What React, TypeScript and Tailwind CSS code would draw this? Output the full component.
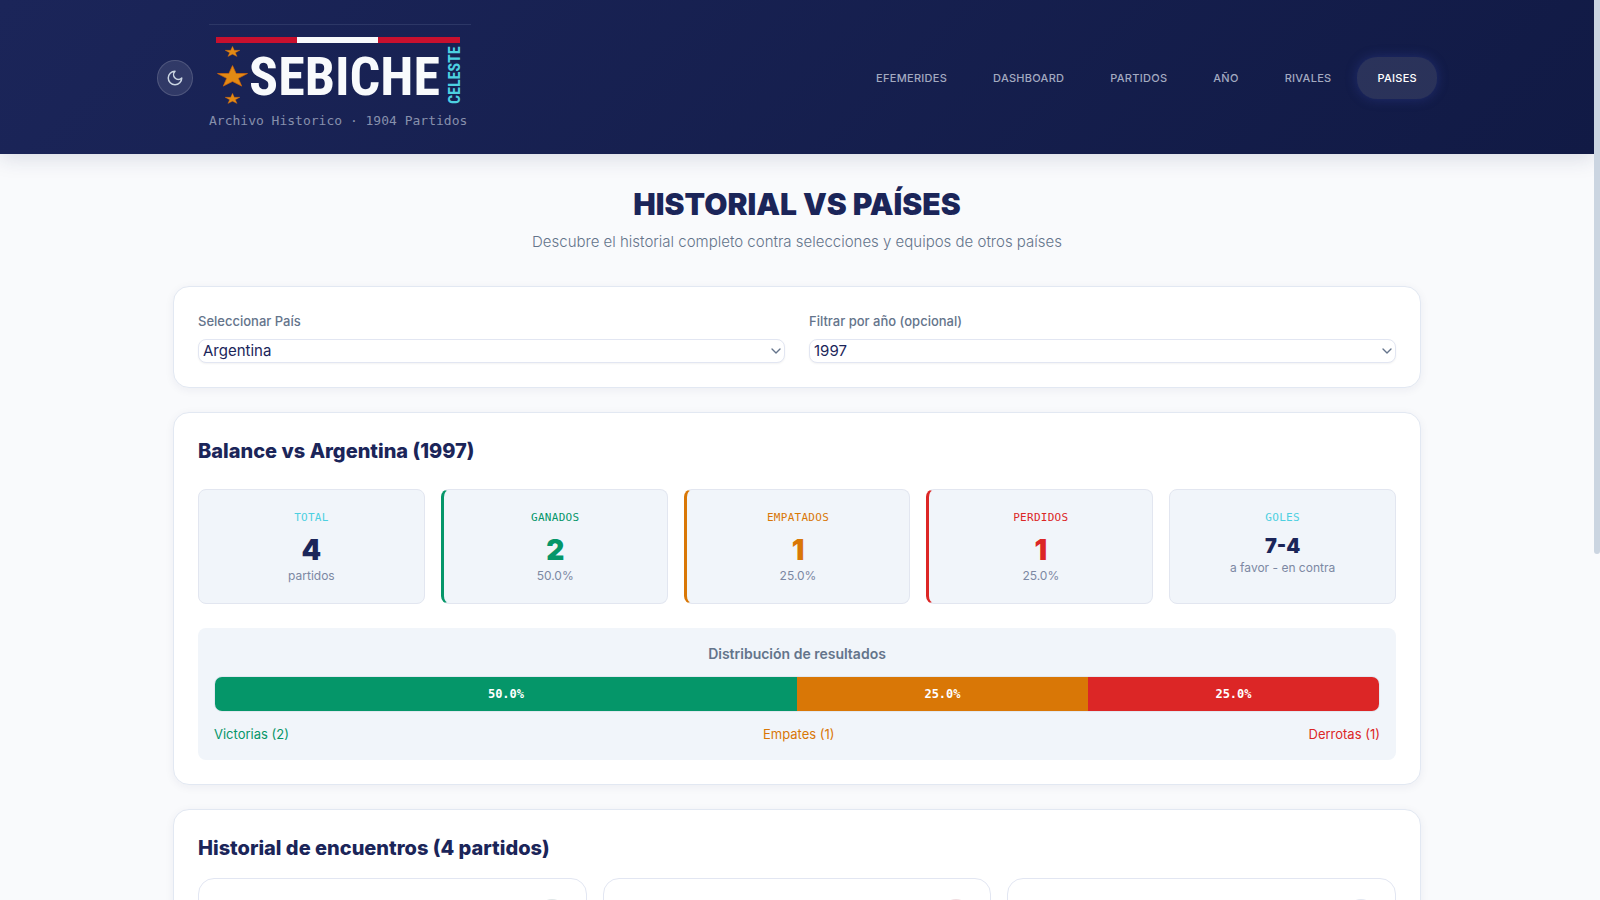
import { ChevronDown } from 'lucide-react';

const NAV_ITEMS = ['Efemerides', 'Dashboard', 'Partidos', 'Año', 'Rivales', 'Paises'];

const STATS = [
    { label: 'Total', value: '4', note: 'partidos', labelColor: 'text-[#4dd0e1]', valueColor: 'text-[#1b2559]', size: 'text-[28px] leading-8', border: '' },
    { label: 'Ganados', value: '2', note: '50.0%', labelColor: 'text-[#059669]', valueColor: 'text-[#059669]', size: 'text-[28px] leading-8', border: 'border-l-[3px] border-l-[#059669]' },
    { label: 'Empatados', value: '1', note: '25.0%', labelColor: 'text-[#d97706]', valueColor: 'text-[#d97706]', size: 'text-[28px] leading-8', border: 'border-l-[3px] border-l-[#d97706]' },
    { label: 'Perdidos', value: '1', note: '25.0%', labelColor: 'text-[#dc2626]', valueColor: 'text-[#dc2626]', size: 'text-[28px] leading-8', border: 'border-l-[3px] border-l-[#dc2626]' },
    { label: 'Goles', value: '7-4', note: 'a favor - en contra', labelColor: 'text-[#4dd0e1]', valueColor: 'text-[#1b2559]', size: 'text-xl leading-6', border: '' },
];

const RESULTS = [
    { label: 'Victorias', count: 2, pct: 50, bar: 'bg-[#059669]', text: 'text-[#059669]' },
    { label: 'Empates', count: 1, pct: 25, bar: 'bg-[#d97706]', text: 'text-[#d97706]' },
    { label: 'Derrotas', count: 1, pct: 25, bar: 'bg-[#dc2626]', text: 'text-[#dc2626]' },
];

const MATCHES = [
    { id: 1, result: 'Victoria', badge: 'bg-[#dfe5e6]' },
    { id: 2, result: 'Derrota', badge: 'bg-[#f0dde0]' },
    { id: 3, result: 'Empate', badge: 'bg-[#e2e6f0]' },
];

const STAR = 'M0 -15 L3.6 -4.6 L15 -4.6 L5.8 1.8 L9.2 12 L0 5.8 L-9.2 12 L-5.8 1.8 L-15 -4.6 L-3.6 -4.6 Z';

const Logo = () => (
    <svg viewBox="0 0 262 85" className="w-[262px] h-[85px]" role="img" aria-label="Sebiche Celeste">
        <path d="M0 0.5H262" stroke="#2c3766" />
        <rect x="7" y="13" width="81" height="6" fill="#c8102e" />
        <rect x="88" y="13" width="81" height="6" fill="#f8fafc" />
        <rect x="169" y="13" width="82" height="6" fill="#c8102e" />
        <g fill="#e28a14" stroke="#d3650a" strokeWidth="0.8">
            <path d={STAR} transform="translate(23.5 28) scale(0.5 0.38)" />
            <path d={STAR} transform="translate(23.5 53) scale(1 0.76)" />
            <path d={STAR} transform="translate(23.5 75) scale(0.5 0.38)" />
        </g>
        <text x="40" y="71" fontSize="54" fontWeight="700" fill="#f8fafc" fontFamily="'Liberation Sans Narrow', 'Roboto Condensed', 'Liberation Sans', sans-serif">
            SEBICHE
        </text>
        <text transform="translate(251 80) rotate(-90)" fontSize="16" fontWeight="700" fill="#4dd0e1" fontFamily="'Liberation Sans Narrow', 'Roboto Condensed', 'Liberation Sans', sans-serif">
            CELESTE
        </text>
    </svg>
);

const MoonIcon = () => (
    <svg viewBox="0 0 24 24" className="w-[18px] h-[18px]" fill="none" stroke="currentColor" strokeWidth="2" strokeLinecap="round" strokeLinejoin="round">
        <path d="M12 3a6 6 0 0 0 9 9 9 9 0 1 1-9-9Z" />
    </svg>
);

const Header = () => (
    <header className="bg-linear-135 from-[#1b2559] to-[#111a45] shadow-[0_4px_20px_rgba(27,37,89,0.15)]">
        <div className="max-w-7xl mx-auto flex items-center justify-between pt-6 pb-[23px]">
            <div className="flex items-center gap-4">
                <button type="button" aria-label="Cambiar tema" className="w-9 h-9 rounded-full bg-white/10 border border-white/15 flex items-center justify-center text-slate-300">
                    <MoonIcon />
                </button>
                <div className="flex flex-col">
                    <Logo />
                    <p className="h-[22px] font-['DejaVu_Sans_Mono',monospace] text-[13px] leading-6 text-[#8790ac]">Archivo Historico · 1904 Partidos</p>
                </div>
            </div>
            <nav className="flex items-center gap-1.5">
                {NAV_ITEMS.map((item) => (
                    <a
                        key={item}
                        href="#"
                        className={
                            item === 'Paises'
                                ? 'px-5 py-3 rounded-[20px] text-[11px] leading-[18px] font-medium uppercase tracking-wide text-white bg-white/10 shadow-[0_0_12px_rgba(59,76,180,0.35)]'
                                : 'px-5 py-3 rounded-[20px] text-[11px] leading-[18px] font-medium uppercase tracking-wide text-[#a3aac0]'
                        }
                    >
                        {item}
                    </a>
                ))}
            </nav>
        </div>
    </header>
);

const SelectField = ({ id, label, options }: { id: string; label: string; options: string[] }) => (
    <div>
        <label htmlFor={id} className="block mb-2 text-[13px] leading-5 font-medium text-[#64748b]">
            {label}
        </label>
        <div className="relative">
            <select id={id} className="block w-full h-6 appearance-none rounded-lg border border-[#e2e6f2] bg-white pl-1 pr-6 text-[15px] leading-5 text-[#1b2559] shadow-xs">
                {options.map((option) => (
                    <option key={option}>{option}</option>
                ))}
            </select>
            <ChevronDown className="absolute right-px top-1 w-4 h-4 text-[#64748b] pointer-events-none" />
        </div>
    </div>
);

const App = () => {
    return (
        <div className="flex h-screen bg-[#f9fafc] font-[Inter,sans-serif] text-[#1b2559]">
            <div className="flex-1 min-w-0 overflow-y-auto [scrollbar-width:none]">
                <Header />

                <main className="max-w-7xl mx-auto px-4 pt-8 pb-12">
                    <div className="text-center mb-8">
                        <h1 className="text-3xl leading-9 font-black">HISTORIAL VS PAÍSES</h1>
                        <p className="mt-2 text-[15px] leading-6 font-light text-[#64748b]">
                            Descubre el historial completo contra selecciones y equipos de otros países
                        </p>
                    </div>

                    {/* Filters */}
                    <section className="grid grid-cols-1 md:grid-cols-2 gap-6 mb-6 p-6 rounded-2xl bg-white border border-[#e2e8f2] shadow-[0_2px_10px_rgba(27,37,89,0.06)]">
                        <SelectField id="country" label="Seleccionar País" options={['Argentina', 'Brasil', 'Chile']} />
                        <SelectField id="year" label="Filtrar por año (opcional)" options={['1997', '1998', '1999']} />
                    </section>

                    {/* Balance */}
                    <section className="mb-6 p-6 rounded-2xl bg-white border border-[#e2e8f2] shadow-[0_2px_10px_rgba(27,37,89,0.06)]">
                        <h2 className="mb-6 text-xl leading-7 font-extrabold">Balance vs Argentina (1997)</h2>
                        <div className="grid grid-cols-2 md:grid-cols-5 gap-4 mb-6">
                            {STATS.map((stat) => (
                                <div key={stat.label} className={`h-[115px] pt-5 text-center rounded-lg bg-[#f1f5fa] border border-[#e2e6f0] ${stat.border}`}>
                                    <div className={`font-['DejaVu_Sans_Mono',monospace] text-[11px] leading-4 uppercase tracking-wide ${stat.labelColor}`}>{stat.label}</div>
                                    <div className={`mt-2 font-black ${stat.size} ${stat.valueColor}`}>{stat.value}</div>
                                    <div className="text-xs leading-5 text-[#7c88a3]">{stat.note}</div>
                                </div>
                            ))}
                        </div>

                        <div className="p-4 rounded-lg bg-[#f1f5fa]">
                            <h3 className="mb-3 text-center text-sm leading-5 font-semibold text-[#64748b]">Distribución de resultados</h3>
                            <div className="flex h-9 rounded-lg overflow-hidden border border-[#e2e8f0]">
                                {RESULTS.map((r) => (
                                    <div
                                        key={r.label}
                                        className={`flex items-center justify-center font-['DejaVu_Sans_Mono',monospace] text-xs font-bold text-white ${r.bar}`}
                                        style={{ width: `${r.pct}%` }}
                                    >
                                        {r.pct.toFixed(1)}%
                                    </div>
                                ))}
                            </div>
                            <div className="flex justify-between mt-3 text-[13px] leading-5">
                                {RESULTS.map((r) => (
                                    <span key={r.label} className={r.text}>
                                        {r.label} ({r.count})
                                    </span>
                                ))}
                            </div>
                        </div>
                    </section>

                    {/* Match list */}
                    <section className="p-6 rounded-2xl bg-white border border-[#e2e8f2] shadow-[0_2px_10px_rgba(27,37,89,0.06)]">
                        <h2 className="mb-4 text-xl leading-7 font-extrabold">Historial de encuentros (4 partidos)</h2>
                        <div className="grid grid-cols-1 md:grid-cols-3 gap-4">
                            {MATCHES.map((match) => (
                                <article key={match.id} className="flex justify-end h-40 p-5 rounded-2xl border border-[#e2e6f2] bg-white">
                                    <span role="img" aria-label={match.result} className={`w-7 h-7 rounded-full ${match.badge}`}></span>
                                </article>
                            ))}
                        </div>
                    </section>
                </main>
            </div>

            {/* Scroll rail */}
            <div className="w-1.5 shrink-0">
                <div className="h-[554px] rounded-b-sm bg-[#cbd5e1]"></div>
            </div>
        </div>
    );
};

export default App;
